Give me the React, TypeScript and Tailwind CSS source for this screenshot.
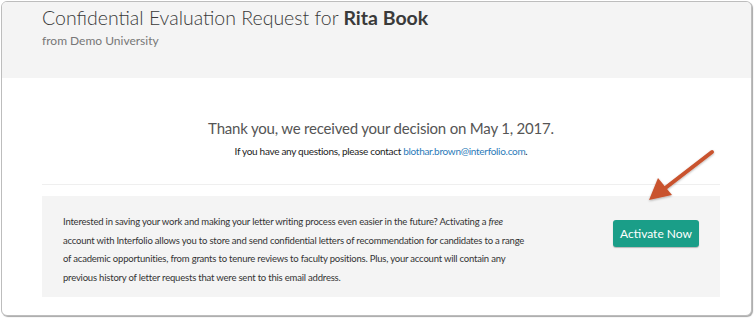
import React from "react";

export default function App() {
  return (
    <div className="w-[756px] h-[320px] bg-white relative overflow-hidden" style={{ fontFamily: "Lato, 'Open Sans', sans-serif" }}>
      <div className="absolute left-[1px] top-[1px] w-[751px] h-[315px] rounded-[6px] border border-[#bdbdbd] bg-white shadow-[1px_1px_1px_rgba(0,0,0,0.35)] overflow-hidden flex flex-col">
        <div className="h-[76px] bg-[#f4f4f4] pl-[40px] pt-[3px]">
          <h1 className="text-[19.5px] leading-[26px] text-[#3a3a3a] font-light">
            Confidential Evaluation Request for <span className="font-bold">Rita Book</span>
          </h1>
          <div className="text-[12px] leading-[16px] mt-[2px] text-[#777]">from Demo University</div>
        </div>
        <div className="flex-1 pl-[40px] pr-[31px]">
          <div className="pt-[40px] text-center">
            <div className="text-[15px] leading-[20px] text-[#555] tracking-[-0.2px]">Thank you, we received your decision on May 1, 2017.</div>
            <div className="text-[10px] leading-[14px] mt-[6px] text-[#222] tracking-[-0.3px]">
              If you have any questions, please contact <span className="text-[#2b7bb9]">blothar.brown@interfolio.com</span>.
            </div>
          </div>
          <div className="mt-[26px] h-px bg-[#efefef]" />
          <div className="mt-[11px] h-[101px] bg-[#f4f4f4] flex items-start pl-[21px] pr-[21px] pt-[17px]">
            <p className="w-[466px] shrink-0 text-[9.5px] leading-[18.7px] text-[#333] tracking-[-0.2px]">
              Interested in saving your work and making your letter writing process even easier in the future? Activating a <em>free</em> account with Interfolio allows you to store and send confidential letters of recommendation for candidates to a range of academic opportunities, from grants to tenure reviews to faculty positions. Plus, your account will contain any previous history of letter requests that were sent to this email address.
            </p>
            <div className="flex-1 flex justify-end pt-[7px]">
              <button className="w-[86px] h-[27px] rounded-[3px] bg-[#1a9e88] text-white text-[12px] shadow-[0_1px_1px_rgba(0,0,0,0.25)]">
                Activate Now
              </button>
            </div>
          </div>
        </div>
      </div>
      <svg className="absolute left-0 top-0" width="756" height="320" viewBox="0 0 756 320">
        <defs>
          <filter id="sh" x="-20%" y="-20%" width="140%" height="140%">
            <feDropShadow dx="0" dy="1" stdDeviation="1" floodColor="#000" floodOpacity="0.3" />
          </filter>
        </defs>
        <g filter="url(#sh)">
          <line x1="712" y1="152" x2="664" y2="189" stroke="#c9532e" strokeWidth="4" strokeLinecap="round" />
          <polygon points="649,200 658,178 672,195" fill="#c9532e" />
        </g>
      </svg>
    </div>
  );
}
